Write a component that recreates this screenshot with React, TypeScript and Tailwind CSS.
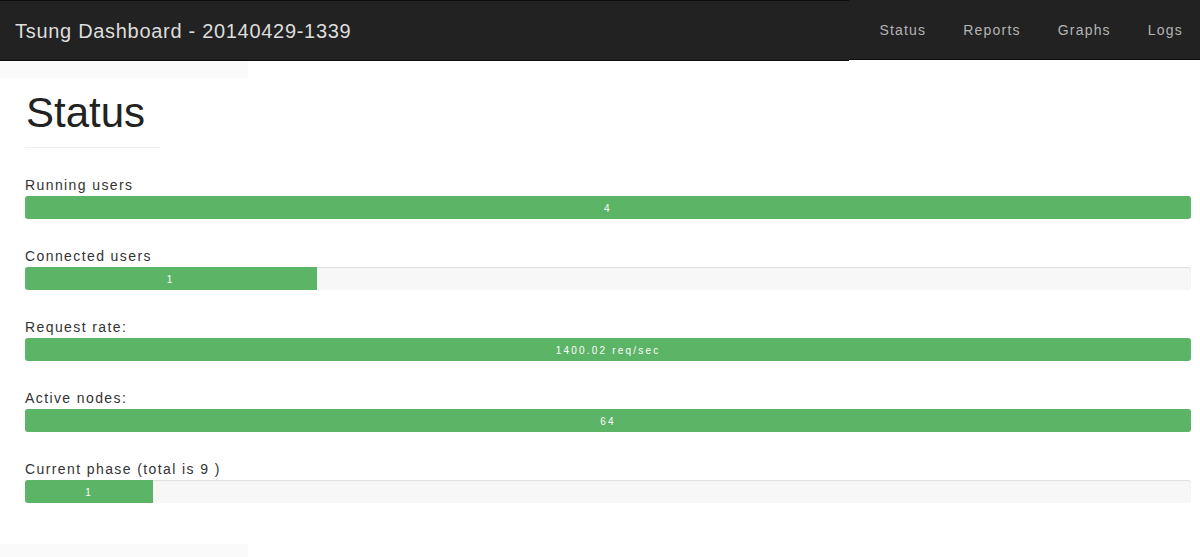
const navItems = ["Status", "Reports", "Graphs", "Logs"];

const bars = [
  { label: "Running users", value: "4", width: "100%" },
  { label: "Connected users", value: "1", width: "25%" },
  { label: "Request rate:", value: "1400.02 req/sec", width: "100%" },
  { label: "Active nodes:", value: "64", width: "100%" },
  { label: "Current phase (total is 9 )", value: "1", width: "11%" },
];

export default function App() {
  return (
    <div className="h-[557px] w-[1200px] overflow-hidden bg-white font-['Liberation_Sans',Arial,sans-serif]">
      <nav className="flex h-[61px] items-start">
        <div className="flex h-[61px] w-[849px] items-center border-y border-t-[#0c0c0c] border-b-[#0c0c0c] bg-[#222222] pl-[15px]">
          <span className="text-[20px] tracking-[0.7px] text-[#dddddd]">Tsung Dashboard - 20140429-1339</span>
        </div>
        <div className="flex h-[60px] flex-1 items-center justify-end border-b border-b-[#0c0c0c] bg-[#222222] pt-px pr-[17px]">
          <ul className="flex gap-[37px] text-[14px] tracking-[1.2px] text-[#b4b4b4]">
            {navItems.map((item) => (
              <li key={item}>{item}</li>
            ))}
          </ul>
        </div>
      </nav>

      <div className="flex h-[483px] flex-col">
        <div className="h-[17px] w-[248px] bg-[#fafafa]" />
        <main className="flex-1 pl-[25px] pr-[9px]">
          <h1 className="mt-[11px] pb-[11px] pl-[1px] text-[42px] leading-[47px] font-normal text-[#222222]">Status</h1>
          <div className="h-px w-[135px] bg-[#f0f0f0]" />
          <div className="mt-[27px] flex flex-col gap-[27px]">
            {bars.map((bar) => (
              <div key={bar.label}>
                <div className="h-[20px] text-[14px] leading-[20px] tracking-[1.4px] text-[#333333]">{bar.label}</div>
                <div className="mt-[1px] flex h-[23px] overflow-hidden rounded-[3px] bg-[#f7f7f7] shadow-[inset_0_1px_1px_rgba(0,0,0,0.1)]">
                  <div
                    className="flex items-center justify-center bg-[#5cb466] pt-px text-[10px] tracking-[2.2px] text-white"
                    style={{ width: bar.width }}
                  >
                    {bar.value}
                  </div>
                </div>
              </div>
            ))}
          </div>
        </main>
      </div>

      <div className="h-[13px] w-[248px] bg-[#fafafa]" />
    </div>
  );
}
